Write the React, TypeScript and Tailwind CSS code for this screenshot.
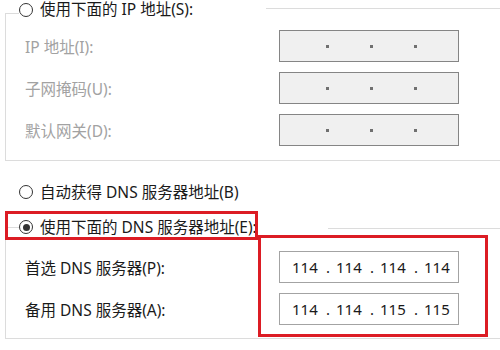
import React from "react";

const FONT = { fontFamily: '"Noto Sans", "Noto Sans CJK SC", sans-serif' };

function Radio({ checked }: { checked?: boolean }) {
  return (
    <div className="w-[14px] h-[14px] shrink-0 rounded-full border border-[#333333] bg-white flex items-center justify-center">
      {checked && <div className="w-[7px] h-[7px] rounded-full bg-[#333333]" />}
    </div>
  );
}

function IpBox({ values, disabled }: { values?: string[]; disabled?: boolean }) {
  const v = values ?? ["", "", "", ""];
  return (
    <div
      className={
        disabled
          ? "w-[180px] h-[32px] shrink-0 border-[1.5px] border-[#858585] bg-[#f0f0f0] flex items-center pl-[12px]"
          : "w-[180px] h-[32px] shrink-0 border border-[#a3a3a3] bg-white flex items-center pl-[12px]"
      }
    >
      {v.map((o, i) => (
        <React.Fragment key={i}>
          <span className="w-[24px] text-center text-[15px] leading-[20px] text-[#1a1a1a]">{o}</span>
          {i < 3 &&
            (disabled ? (
              <span className="w-[20px] flex justify-center pl-[2px]">
                <span className="w-[3px] h-[3px] bg-[#707070]" />
              </span>
            ) : (
              <span className="w-[20px] text-left pl-[10px] text-[15px] leading-[20px] text-[#1a1a1a]">.</span>
            ))}
        </React.Fragment>
      ))}
    </div>
  );
}

function Row({ label, children, gray }: { label: string; children: React.ReactNode; gray?: boolean }) {
  return (
    <div className="flex items-center h-[42px]">
      <div
        className={
          gray
            ? "w-[273px] pl-[19px] pt-[2px] text-[15.5px] leading-[20px] text-[#a2a2a2]"
            : "w-[273px] pl-[19px] pt-[2px] text-[15.5px] leading-[20px] text-[#1a1a1a]"
        }
      >
        {label}
      </div>
      {children}
    </div>
  );
}

export default function App() {
  return (
    <div className="relative w-[500px] h-[350px] bg-white overflow-hidden" style={FONT}>
      {/* Group 1 */}
      <div className="ml-[5px] mt-[13px] h-[148px] border-l border-b border-[#dcdcdc] flex flex-col">
        <div className="-mt-[13px] flex items-start h-[20px]">
          <div className="w-[13px] h-px bg-[#dcdcdc] mt-[13px]" />
          <div className="w-[247px] flex items-start bg-white">
            <div className="mt-[3px]">
              <Radio />
            </div>
            <span className="ml-[7px] text-[15.5px] leading-[18px] text-[#1a1a1a]">使用下面的 IP 地址(S):</span>
          </div>
          <div className="flex-1 h-px bg-[#dcdcdc] mt-[8px]" />
        </div>
        <div className="mt-[5px] flex flex-col">
          <Row label="IP 地址(I):" gray>
            <IpBox disabled />
          </Row>
          <Row label="子网掩码(U):" gray>
            <IpBox disabled />
          </Row>
          <Row label="默认网关(D):" gray>
            <IpBox disabled />
          </Row>
        </div>
      </div>

      {/* Auto DNS */}
      <div className="mt-[22px] h-[18px] flex items-center pl-[19px]">
        <Radio />
        <span className="ml-[7px] text-[15.5px] leading-[18px] text-[#1a1a1a]">自动获得 DNS 服务器地址(B)</span>
      </div>

      {/* Group 2 */}
      <div className="ml-[5px] mt-[26px] h-[112px] border-l border-b border-[#dcdcdc] flex flex-col">
        <div className="-mt-[10px] flex items-center h-[20px]">
          <div className="w-[13px] h-px bg-[#dcdcdc]" />
          <div className="w-[309px] flex items-center bg-white">
            <Radio checked />
            <span className="ml-[7px] text-[15.5px] leading-[18px] text-[#1a1a1a]">使用下面的 DNS 服务器地址(E):</span>
          </div>
          <div className="flex-1 h-px bg-[#dcdcdc] mt-[2px]" />
        </div>
        <div className="mt-[9px] flex flex-col">
          <Row label="首选 DNS 服务器(P):">
            <IpBox values={["114", "114", "114", "114"]} />
          </Row>
          <Row label="备用 DNS 服务器(A):">
            <IpBox values={["114", "114", "115", "115"]} />
          </Row>
        </div>
      </div>

      {/* Red annotation boxes */}
      <div className="absolute left-[5px] top-[211px] w-[253px] h-[29px] border-[3px] border-[#dc1c24]" />
      <div className="absolute left-[258px] top-[235px] w-[230px] h-[102px] border-[3px] border-[#dc1c24]" />
    </div>
  );
}
